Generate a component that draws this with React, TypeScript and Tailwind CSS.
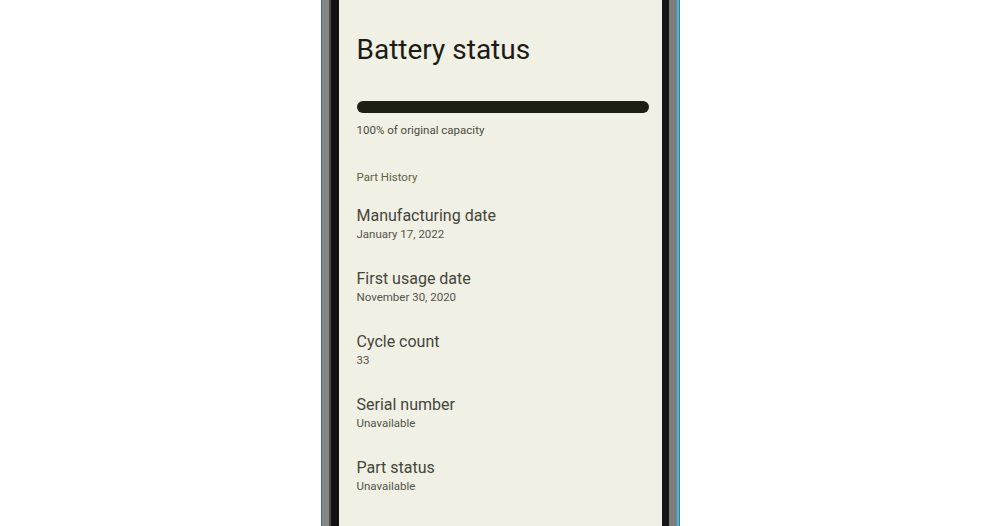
const rows = [
  { label: 'Manufacturing date', value: 'January 17, 2022' },
  { label: 'First usage date', value: 'November 30, 2020' },
  { label: 'Cycle count', value: '33' },
  { label: 'Serial number', value: 'Unavailable' },
  { label: 'Part status', value: 'Unavailable' },
]

export default function App() {
  return (
    <div className="w-full h-[526px] bg-white flex justify-center overflow-hidden font-['Roboto',sans-serif]">
      <div className="flex h-full">
        {/* left bezel */}
        <div className="w-[1px] bg-[#3f6c74]" />
        <div className="w-[7px] bg-[#868686]" />
        <div className="w-[2px] bg-[#4a4a4a]" />
        <div className="w-[8px] bg-[#121212]" />

        <main className="w-[323px] bg-[#f1f0e5] pl-[18px] pr-[13px] pt-[33px]">
          <h1 className="text-[28px] leading-[34px] text-[#1b1c14]">Battery status</h1>
          <div className="mt-[34px] h-[12px] rounded-full bg-[#1e1f13]" />
          <p className="mt-[9px] text-[11.5px] leading-[16px] text-[#494a40]">100% of original capacity</p>
          <p className="mt-[31px] text-[11.5px] leading-[16px] text-[#5a6240]">Part History</p>

          <div className="mt-[21px] flex flex-col gap-[27px]">
            {rows.map((r) => (
              <div key={r.label}>
                <p className="text-[16px] leading-[20px] text-[#44453b]">{r.label}</p>
                <p className="text-[11.5px] leading-[16px] text-[#53544a]">{r.value}</p>
              </div>
            ))}
          </div>
        </main>

        {/* right bezel */}
        <div className="w-[7px] bg-[#161616]" />
        <div className="w-[8px] bg-[#7d7d7d]" />
        <div className="w-[2px] bg-[#4fb6d6]" />
        <div className="w-[1px] bg-[#3b7d92]" />
      </div>
    </div>
  )
}
